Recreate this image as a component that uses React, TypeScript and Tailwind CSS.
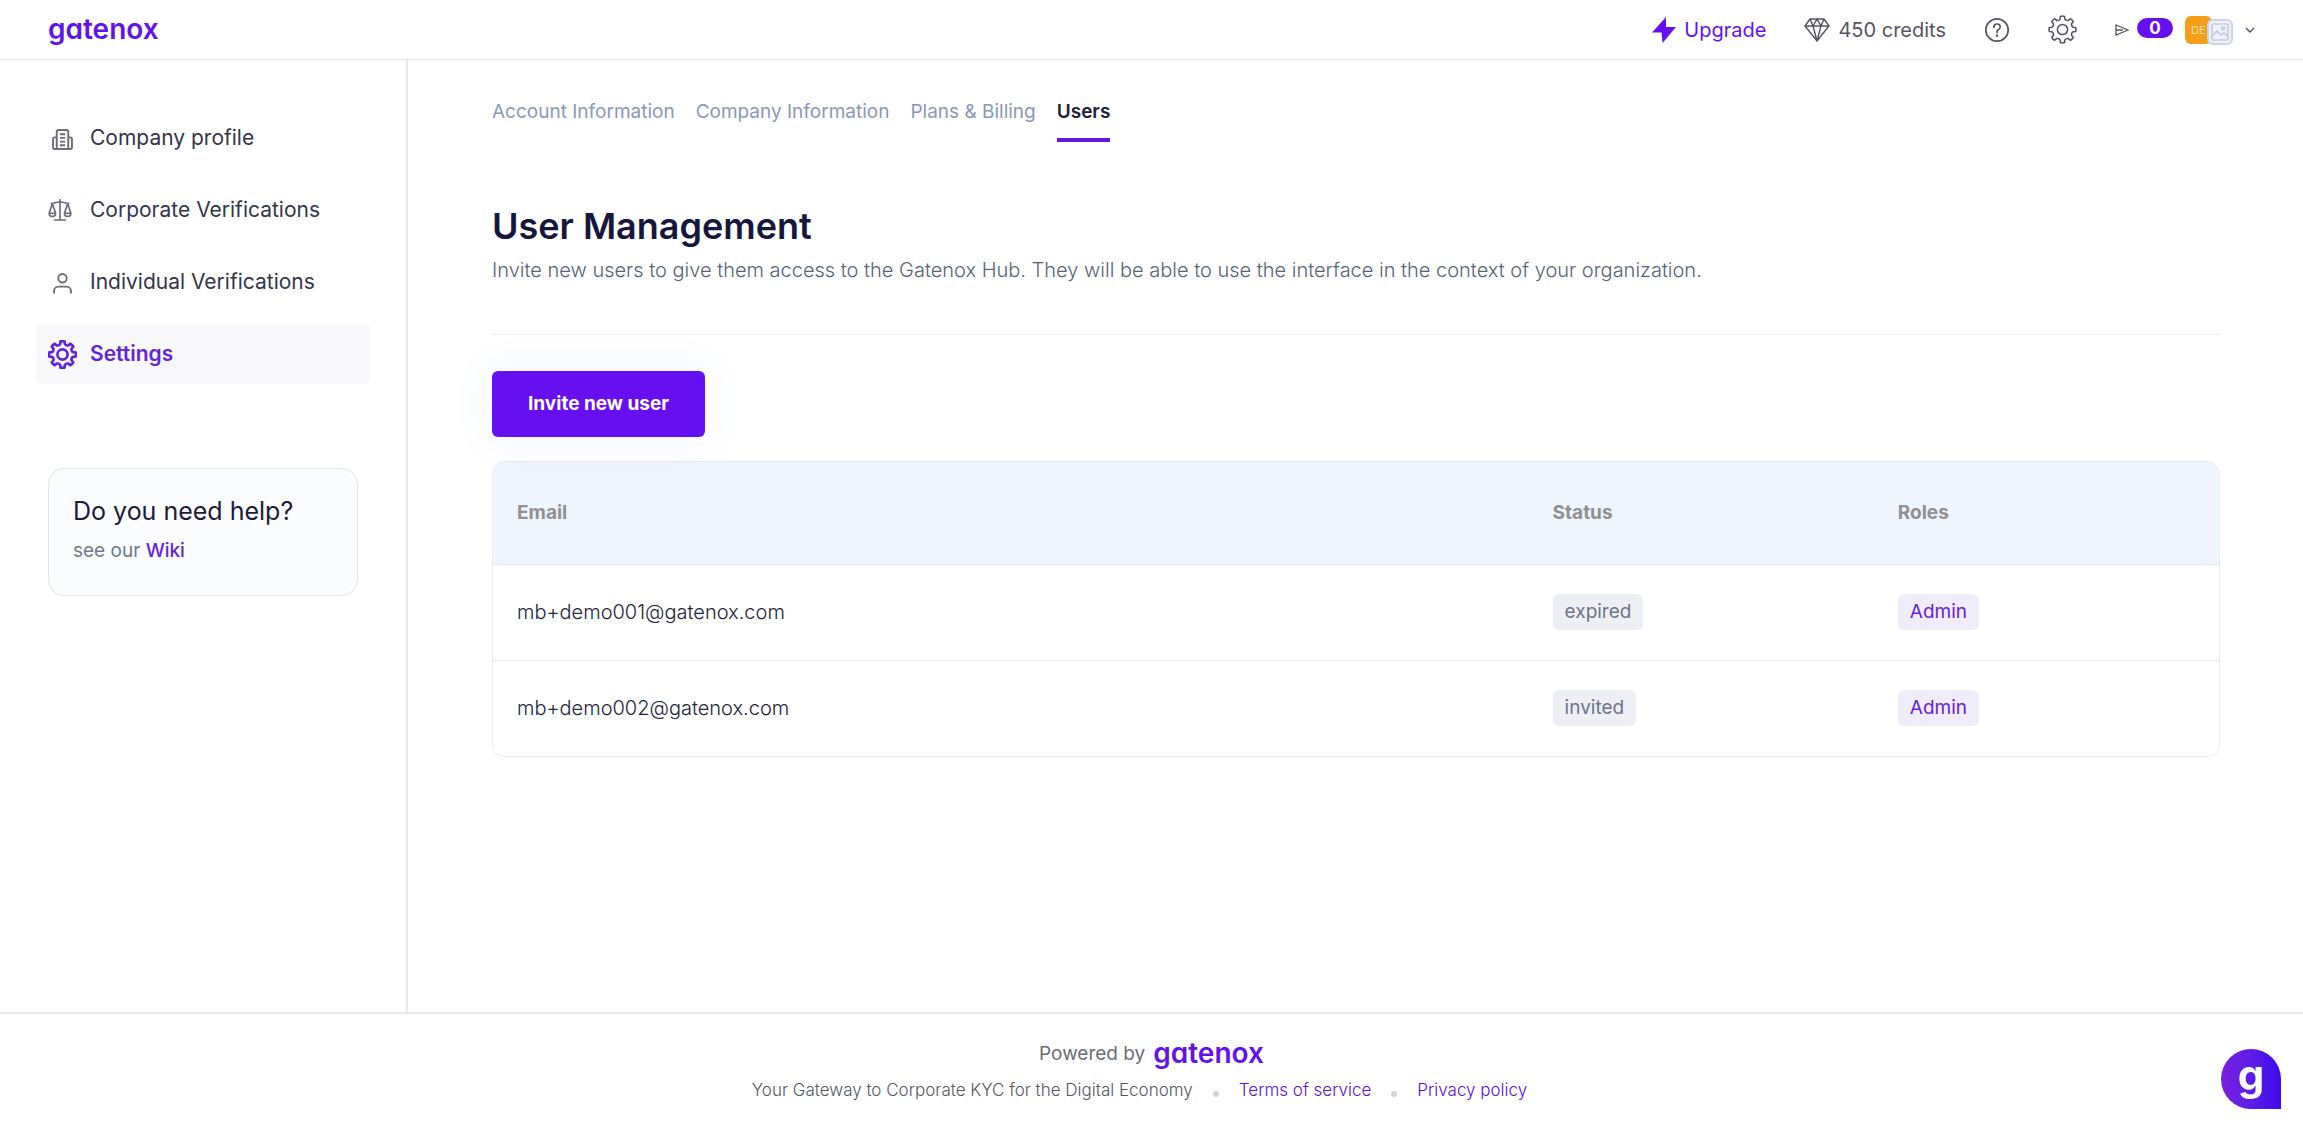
import React from "react";

function Wordmark() {
  return <span className="pb-[2px] text-[28px] leading-9 font-semibold text-[#6113ea] [font-feature-settings:'cv11']">gatenox</span>;
}

function Gear({ className, width }: { className: string; width: number }) {
  const pts: string[] = [];
  for (let i = 0; i < 8; i++) {
    const at = (r: number, deg: number) => {
      const a = ((i * 45 + deg) * Math.PI) / 180;
      return (12 + r * Math.sin(a)).toFixed(2) + " " + (12 - r * Math.cos(a)).toFixed(2);
    };
    pts.push((i === 0 ? "M" : "L") + at(9, -12) + "L" + at(11, -9) + "Q" + at(11.4, 0) + " " + at(11, 9) + "L" + at(9, 12) + "Q" + at(7.6, 22.5) + " " + at(9, 33));
  }
  return (
    <svg viewBox="0 0 24 24" className={className} fill="none" stroke="currentColor" strokeWidth={width} strokeLinejoin="round" aria-hidden="true">
      <path d={pts.join("") + "Z"} />
      <circle cx="12" cy="12" r="4.2" />
    </svg>
  );
}

function Building() {
  return (
    <svg viewBox="0 0 20 20" className="mt-[2px] ml-1 size-[21px]" fill="none" stroke="currentColor" strokeWidth="1.8" strokeLinejoin="round" aria-hidden="true">
      <path d="M4.500 19V2.500A1.500 1.500 0 0 1 6 1h8a1.500 1.500 0 0 1 1.500 1.500V19M4.500 8H2.500A1.500 1.500 0 0 0 1 9.500v8A1.500 1.500 0 0 0 2.500 19h15a1.500 1.500 0 0 0 1.500-1.500v-8A1.500 1.500 0 0 0 17.500 8h-2" />
      <path d="M7.500 5h5M7.500 8.500h5M7.500 12h5M7.500 15.500h5" />
    </svg>
  );
}

function Scales() {
  return (
    <svg viewBox="0 0 22 20" className="h-[22px] w-6" fill="none" stroke="currentColor" strokeWidth="1.5" strokeLinejoin="round" strokeLinecap="round" aria-hidden="true">
      <path d="M11 0.700V19M6 19.200h10M3 4l8-1.500L19 4M4 4.200L1 13M4 4.200L7 13M18 4.200L15 13M18 4.200L21 13M1 13q0 3 3 3t3-3zM15 13q0 3 3 3t3-3z" />
    </svg>
  );
}

function Person() {
  return (
    <svg viewBox="0 0 20 20" className="mt-[2px] ml-1 size-[21px]" fill="none" stroke="currentColor" strokeWidth="1.8" aria-hidden="true">
      <circle cx="10" cy="5" r="4" />
      <path d="M2 19.500V17a4 4 0 0 1 4-4h8a4 4 0 0 1 4 4v2.500" />
    </svg>
  );
}

function Header() {
  return (
    <header className="flex h-[60px] items-center justify-between border-b border-[#e5e5e5] pr-12 pl-12">
      <a href="#home" aria-label="gatenox" className="flex items-center"><Wordmark /></a>
      <div className="flex items-center text-[20px] leading-7 text-[#555564]">
        <a href="#upgrade" className="flex items-center gap-2 text-[#6610f2]">
          <svg viewBox="0 0 24 26" className="h-[26px] w-6" fill="currentColor" aria-hidden="true"><path d="M14 0L0 15.500h9.500L10.500 26L24 10H14z" /></svg>
          <span>Upgrade</span>
        </a>
        <a href="#credits" className="ml-[38px] flex items-center gap-2">
          <svg viewBox="0 0 26 24" className="h-6 w-[26px]" fill="none" stroke="currentColor" strokeWidth="1.4" strokeLinejoin="round" aria-hidden="true"><path d="M6 1h14l5 7-12 15L1 8zM1 8h24M9 8l4 15 4-15M6 1l3 7 4-7 4 7 3-7" /></svg>
          <span>450 credits</span>
        </a>
        <button aria-label="Help" className="ml-[38px]">
          <svg viewBox="0 0 26 26" className="size-[26px]" fill="none" stroke="currentColor" strokeWidth="1.700" strokeLinecap="round" aria-hidden="true"><circle cx="13" cy="13" r="11.200" /><path d="M9.800 10.200q0-3.200 3.200-3.200t3.200 3q0 1.500-1.700 2.500T13 15.500" /><circle cx="13" cy="18.700" r="0.500" /></svg>
        </button>
        <button aria-label="Settings" className="ml-[38px]"><Gear className="size-[29px]" width={1.3} /></button>
        <button aria-label="Notifications" className="ml-[38px] flex items-center gap-2">
          <svg viewBox="0 0 14 12" className="h-3 w-[14px]" fill="none" stroke="currentColor" strokeWidth="1.300" aria-hidden="true"><path d="M1 1l12 5-12 5zM1 6h7" /></svg>
          <span className="mb-1 flex h-5 w-9 items-center justify-center rounded-full bg-[#6610f2] text-[17px] leading-5 font-bold text-white">0</span>
        </button>
        <button aria-label="Account" className="ml-3 flex items-center">
          <span className="flex h-7 w-[27px] items-center rounded-md bg-[#f59e17] pl-[6px] text-[11px] leading-4 text-[#fbdca4]">DE</span>
          <span className="mt-1 -ml-[5px] flex size-[26px] items-center justify-center rounded-md border-2 border-[#cdd3e2] bg-[#eef1f8] text-[#c3cbdd]">
            <svg viewBox="0 0 18 18" className="size-[18px]" fill="none" stroke="currentColor" strokeWidth="1.600" aria-hidden="true"><rect x="1" y="1" width="16" height="16" rx="1" /><path d="M1 13l5-5 4 4 3-2 4 3" /><circle cx="12" cy="5.500" r="1.500" /></svg>
          </span>
          <svg viewBox="0 0 10 6" className="ml-3 h-[6px] w-[10px]" fill="none" stroke="currentColor" strokeWidth="1.400" aria-hidden="true"><path d="M1 1l4 4 4-4" /></svg>
        </button>
      </div>
    </header>
  );
}

const NAV = [
  { label: "Company profile", icon: <Building /> },
  { label: "Corporate Verifications", icon: <Scales /> },
  { label: "Individual Verifications", icon: <Person /> },
];

function Sidebar() {
  return (
    <aside className="w-[408px] shrink-0 border-r-2 border-[#e8e8ea] px-9 pt-12">
      <nav className="flex flex-col gap-3 text-[21px] leading-7 text-[#33364a]">
        {NAV.map((n) => (
          <a key={n.label} href="#nav" className="flex h-[60px] items-center px-3">
            <span className="flex w-[42px] text-[#6b6b7a]">{n.icon}</span>
            <span>{n.label}</span>
          </a>
        ))}
        <a href="#settings" aria-current="page" className="flex h-[60px] items-center rounded-md bg-[#f8f8fb] px-3 font-semibold text-[#6324d6]">
          <span className="flex w-[42px]"><Gear className="size-[29px]" width={2.2} /></span>
          <span>Settings</span>
        </a>
      </nav>
      <section className="mx-3 mt-[84px] rounded-2xl border border-[#e4e4ea] bg-[#fbfcfe] px-6 pt-6 pb-7">
        <h2 className="text-[25px] leading-9 text-[#1c1b3a]">Do you need help?</h2>
        <p className="mt-[6px] text-[19px] leading-8 text-[#727a89]">see our <a href="#wiki" className="font-medium text-[#6324d6]">Wiki</a></p>
      </section>
    </aside>
  );
}

const USERS = [
  { email: "mb+demo001@gatenox.com", status: "expired", role: "Admin" },
  { email: "mb+demo002@gatenox.com", status: "invited", role: "Admin" },
];

function Main() {
  return (
    <main className="min-w-0 flex-1 pr-[83px] pl-[84px]">
      <nav className="flex gap-[21px] pt-9 text-[19px] leading-8 text-[#8b98b4]">
        <a href="#account">Account Information</a>
        <a href="#company">Company Information</a>
        <a href="#plans">Plans &amp; Billing</a>
        <a href="#users" aria-current="page" className="border-b-4 border-[#6019d8] pb-[10px] font-semibold text-[#22203c]">Users</a>
      </nav>
      <div className="border-b border-[#eef0f3] pt-[60px] pb-12">
        <h1 className="text-[36px] leading-12 font-semibold text-[#16173d]">User Management</h1>
        <p className="mt-1 text-[20px] leading-8 font-light text-[#586474]">Invite new users to give them access to the Gatenox Hub. They will be able to use the interface in the context of your organization.</p>
      </div>
      <button className="mt-9 h-[66px] rounded-md bg-[#6610f2] px-9 text-[19px] leading-7 font-bold text-white shadow-[0_0_40px_rgba(82,130,220,0.10)]">Invite new user</button>
      <div className="mt-6 overflow-hidden rounded-xl border border-[#e9ecef]">
        <table className="w-full table-fixed text-left text-[19px] leading-7 text-[#3f4254]">
          <thead className="bg-[#eff5fc] text-[#8e9093]">
            <tr className="h-[102px] border-b border-[#e9ecef]">
              <th scope="col" className="w-3/5 px-6 font-bold">Email</th>
              <th scope="col" className="w-1/5 px-6 font-bold">Status</th>
              <th scope="col" className="w-1/5 px-6 font-bold">Roles</th>
            </tr>
          </thead>
          <tbody>
            {USERS.map((u) => (
              <tr key={u.email} className="h-24 border-b border-[#ececee] last:border-b-0">
                <td className="px-6 text-[20px] font-light text-[#23263a]">{u.email}</td>
                <td className="px-6"><span className="inline-block rounded-md bg-[#eeeff4] px-3 py-1 text-[#6c7589]">{u.status}</span></td>
                <td className="px-6"><span className="inline-block rounded-md bg-[#f1ecfa] px-3 py-1 text-[#6324d6]">{u.role}</span></td>
              </tr>
            ))}
          </tbody>
        </table>
      </div>
    </main>
  );
}

function Dot() {
  return <span className="mx-5 mt-2 size-[6px] rounded-full bg-[#d3d3d8]" />;
}

function Footer() {
  return (
    <footer className="flex h-[119px] flex-col items-center border-t-2 border-[#e8e8ea] pt-[22px] text-[#6b6d75]">
      <p className="flex h-9 items-center gap-2 text-[19px] leading-9">Powered by <Wordmark /></p>
      <p className="mr-6 flex items-center text-[17px] leading-9 font-light text-[#55575f]">
        Your Gateway to Corporate KYC for the Digital Economy
        <Dot />
        <a href="#terms" className="text-[#5a10d6]">Terms of service</a>
        <Dot />
        <a href="#privacy" className="text-[#5a10d6]">Privacy policy</a>
      </p>
    </footer>
  );
}

export default function App() {
  return (
    <div className="flex min-h-screen flex-col bg-white font-['Inter',sans-serif]">
      <Header />
      <div className="flex flex-1">
        <Sidebar />
        <Main />
      </div>
      <Footer />
      <button aria-label="Open chat" className="fixed right-[22px] bottom-[22px] flex size-[60px] items-center justify-center rounded-full rounded-br-sm bg-linear-to-r from-[#7a1fe0] to-[#3d08ee] pb-2 text-[42px] leading-none font-bold text-white">g</button>
    </div>
  );
}
